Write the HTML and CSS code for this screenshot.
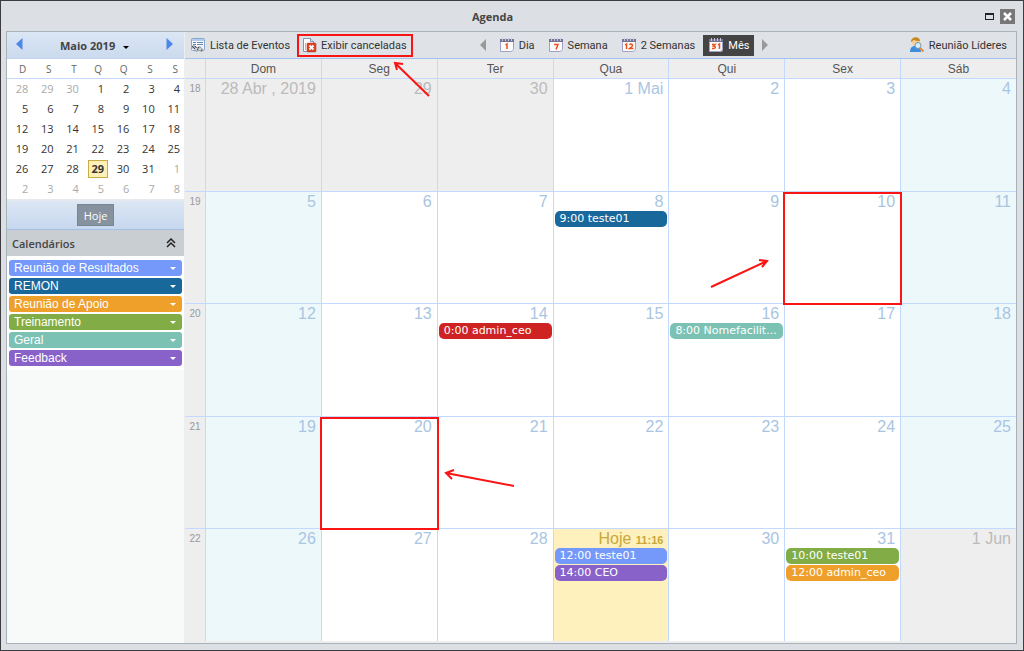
FILE: index.html
```html
<!DOCTYPE html>
<html lang="pt-BR">
<head>
    <meta charset="UTF-8">
    <meta name="viewport" content="width=device-width, initial-scale=1.0">
    <title>Agenda</title>
    <link rel="stylesheet" href="styles.css">
</head>
<body>
    <svg class="defs" width="0" height="0" aria-hidden="true">
        <symbol id="cal" viewBox="0 0 16 16">
            <path d="M1.500 3.500h13v9l-2 2h-11z" fill="#fdfcfd" stroke="#a29fc4"/>
            <path d="M1 2h14v3H1z" fill="#777394"/>
            <path d="M3.500 1v3M6.500 1v3M9.500 1v3M12.500 1v3" stroke="#c9c5d8"/>
            <path d="M11.500 14.500l3-3v3z" fill="#c9c5e4"/>
        </symbol>
    </svg>
    <div class="window">
        <div class="titlebar">
            <h1>Agenda</h1>
            <button class="maximize" aria-label="Maximizar"></button>
            <button class="close" aria-label="Fechar">
                <svg width="15" height="15" viewBox="0 0 15 15"><path d="M4 4l7 7M11 4l-7 7" stroke="#fff" stroke-width="2.500"/></svg>
            </button>
        </div>
        <div class="content">
            <div class="sidebar">
                <div class="month-nav">
                    <button aria-label="Anterior"><svg width="7" height="12" viewBox="0 0 7 12"><path d="M6.500 0v12L0 6z" fill="#4c86e6"/></svg></button>
                    <button class="month">Maio 2019 <svg width="6" height="3" viewBox="0 0 6 3"><path d="M0 0h6L3 3z" fill="#000"/></svg></button>
                    <button aria-label="Próximo"><svg width="7" height="12" viewBox="0 0 7 12"><path d="M.5 0v12L7 6z" fill="#4c86e6"/></svg></button>
                </div>
                <table class="mini">
                    <thead>
                        <tr><th>D</th><th>S</th><th>T</th><th>Q</th><th>Q</th><th>S</th><th>S</th></tr>
                    </thead>
                    <tbody>
                        <tr><td class="off">28</td><td class="off">29</td><td class="off">30</td><td>1</td><td>2</td><td>3</td><td>4</td></tr>
                        <tr><td>5</td><td>6</td><td>7</td><td>8</td><td>9</td><td>10</td><td>11</td></tr>
                        <tr><td>12</td><td>13</td><td>14</td><td>15</td><td>16</td><td>17</td><td>18</td></tr>
                        <tr><td>19</td><td>20</td><td>21</td><td>22</td><td>23</td><td>24</td><td>25</td></tr>
                        <tr><td>26</td><td>27</td><td>28</td><td class="today"><span>29</span></td><td>30</td><td>31</td><td class="off">1</td></tr>
                        <tr><td class="off">2</td><td class="off">3</td><td class="off">4</td><td class="off">5</td><td class="off">6</td><td class="off">7</td><td class="off">8</td></tr>
                    </tbody>
                </table>
                <div class="mini-footer"><button>Hoje</button></div>
                <div class="panel-header">
                    <h2>Calendários</h2>
                    <button aria-label="Recolher"><svg width="10" height="10" viewBox="0 0 10 10"><path d="M1 5l4-4 4 4M1 9l4-4 4 4" fill="none" stroke="#222" stroke-width="1.500"/></svg></button>
                </div>
                <div class="calendars">
                    <button class="blue">Reunião de Resultados<i></i></button>
                    <button class="navy">REMON<i></i></button>
                    <button class="orange">Reunião de Apoio<i></i></button>
                    <button class="green">Treinamento<i></i></button>
                    <button class="teal">Geral<i></i></button>
                    <button class="purple">Feedback<i></i></button>
                </div>
            </div>
            <div class="main">
                <div class="toolbar">
                    <button>
                        <svg width="16" height="16" viewBox="0 0 16 16">
                            <rect x="1.500" y="1.500" width="13" height="12" rx="1" fill="#f5f9fd" stroke="#86a5cf"/>
                            <path d="M2 2h12v2H2z" fill="#b5cbea"/>
                            <path d="M3 5.500h3M7 5.500h6M3 7.500h3M7 7.500h6" stroke="#6687b0"/>
                            <path d="M1 9l3-1 3 2 3-1 4 4-2 2-3-1-3 1-2-3-3-1z" fill="#a4abb2"/>
                            <path d="M2 9l4 4M5 9l3 4M8 10l4 4" stroke="#4a525b"/>
                            <circle cx="6" cy="12" r="1" fill="#eee"/><circle cx="10" cy="12" r="1" fill="#eee"/>
                        </svg>
                        Lista de Eventos
                    </button>
                    <button class="marked">
                        <svg width="14" height="16" viewBox="2 0 14 16">
                            <path d="M2.500 1.500h7l3 3v10h-10z" fill="#fff" stroke="#8095b4"/>
                            <path d="M9.500 1.500v3h3" fill="#dbe6f5" stroke="#8095b4"/>
                            <path d="M4.500 6v7" stroke="#a7b8d2"/>
                            <rect x="6" y="6" width="9" height="9" rx="1" fill="#dc4325" stroke="#b5301a" stroke-width=".5"/>
                            <path d="M8.500 8.500l4 4M12.500 8.500l-4 4" stroke="#fff" stroke-width="1.800"/>
                        </svg>
                        Exibir canceladas
                        <svg class="arrow arrow-up" width="38" height="36" viewBox="0 0 38 36"><path d="M36 35L2 2M4 9L2 2l8 1"/></svg>
                    </button>
                    <div class="views">
                        <button aria-label="Voltar"><svg width="6" height="12" viewBox="0 0 6 12"><path d="M6 0v12L0 6z" fill="#999"/></svg></button>
                        <button><svg width="16" height="16"><use href="#cal"/><path d="M6.500 8l1.500-1v5" fill="none" stroke="#f0501c" stroke-width="1.500"/></svg>Dia</button>
                        <button><svg width="16" height="16"><use href="#cal"/><path d="M6 7.500h4l-2 5" fill="none" stroke="#f0501c" stroke-width="1.500"/></svg>Semana</button>
                        <button><svg width="16" height="16"><use href="#cal"/><path d="M4 8l1.500-1v5M8.500 8c1-1.500 4-1 2.500 1.500l-2.500 2h4" fill="none" stroke="#f0501c" stroke-width="1.500"/></svg>2 Semanas</button>
                        <button class="active"><svg width="16" height="16"><use href="#cal"/><path d="M4 7.500h3L5.500 9c3 0 2 3-1.500 2.500M10 8l1.500-1v5" fill="none" stroke="#f0501c" stroke-width="1.500"/></svg>Mês</button>
                        <button aria-label="Avançar"><svg width="6" height="12" viewBox="0 0 6 12"><path d="M0 0v12l6-6z" fill="#999"/></svg></button>
                    </div>
                    <button>
                        <svg width="16" height="16" viewBox="0 0 16 16">
                            <path d="M1 15c0-4 2-6 5-6s6 2 6 6z" fill="#3d8edb"/>
                            <circle cx="6.500" cy="5" r="3.500" fill="#f6cf9b"/>
                            <path d="M2 5c0-6 9-6 9-1-2 1-5-1-6-1-1 0-2 2-3 2z" fill="#c48a1d"/>
                            <path d="M11 11l3.500 3.500" stroke="#e58a3c" stroke-width="2"/>
                            <circle cx="9" cy="8.500" r="3" fill="#d6edfa" stroke="#7c93a8"/>
                        </svg>
                        Reunião Líderes
                    </button>
                </div>
                <div class="month-view">
                    <table class="grid">
                        <thead>
                            <tr><th class="week"></th><th>Dom</th><th>Seg</th><th>Ter</th><th>Qua</th><th>Qui</th><th>Sex</th><th>Sáb</th></tr>
                        </thead>
                        <tbody>
                            <tr>
                                <th class="week">18</th>
                                <td class="off"><b>28 Abr , 2019</b></td>
                                <td class="off"><b>29</b></td>
                                <td class="off"><b>30</b></td>
                                <td><b>1 Mai</b></td>
                                <td><b>2</b></td>
                                <td><b>3</b></td>
                                <td class="weekend"><b>4</b></td>
                            </tr>
                            <tr>
                                <th class="week">19</th>
                                <td class="weekend"><b>5</b></td>
                                <td><b>6</b></td>
                                <td><b>7</b></td>
                                <td><b>8</b><a class="event navy" href="#">9:00 teste01</a></td>
                                <td><b>9</b><svg class="arrow arrow-right" width="60" height="32" viewBox="0 0 60 32"><path d="M2 29L58 3M50 2l8 1-5 6"/></svg></td>
                                <td class="marked"><b>10</b></td>
                                <td class="weekend"><b>11</b></td>
                            </tr>
                            <tr>
                                <th class="week">20</th>
                                <td class="weekend"><b>12</b></td>
                                <td><b>13</b></td>
                                <td><b>14</b><a class="event red" href="#">0:00 admin_ceo</a></td>
                                <td><b>15</b></td>
                                <td><b>16</b><a class="event teal" href="#">8:00 Nomefacilit...</a></td>
                                <td><b>17</b></td>
                                <td class="weekend"><b>18</b></td>
                            </tr>
                            <tr>
                                <th class="week">21</th>
                                <td class="weekend"><b>19</b></td>
                                <td class="marked"><b>20</b></td>
                                <td><b>21</b><svg class="arrow arrow-left" width="72" height="22" viewBox="0 0 72 22"><path d="M70 18L2 5M10 2L2 5l6 6"/></svg></td>
                                <td><b>22</b></td>
                                <td><b>23</b></td>
                                <td><b>24</b></td>
                                <td class="weekend"><b>25</b></td>
                            </tr>
                            <tr>
                                <th class="week">22</th>
                                <td class="weekend"><b>26</b></td>
                                <td><b>27</b></td>
                                <td><b>28</b></td>
                                <td class="today"><b>Hoje <small>11:16</small></b><a class="event blue" href="#">12:00 teste01</a><a class="event purple" href="#">14:00 CEO</a></td>
                                <td><b>30</b></td>
                                <td><b>31</b><a class="event green" href="#">10:00 teste01</a><a class="event orange" href="#">12:00 admin_ceo</a></td>
                                <td class="off"><b>1 Jun</b></td>
                            </tr>
                        </tbody>
                    </table>
                </div>
            </div>
        </div>
    </div>
</body>
</html>
```
FILE: styles.css
```css
* {
    box-sizing: border-box;
}

body {
    margin: 0;
    font-family: "Open Sans", sans-serif;
    font-size: 11px;
    color: #333;
}

button {
    margin: 0;
    padding: 0;
    border: none;
    background: none;
    font: inherit;
    color: inherit;
}

.defs {
    position: absolute;
}

.window {
    display: flex;
    flex-direction: column;
    height: 100vh;
    padding: 0 6px 6px 5px;
    border: 1px solid #3d3d40;
    background: #dcdfe4;
}

.titlebar {
    display: flex;
    align-items: center;
    gap: 6px;
    height: 30px;
    flex: none;
    padding-right: 2px;
}

.titlebar h1 {
    flex: 1;
    margin: 0;
    font-size: 11px;
    text-align: center;
    color: #444;
}

.maximize {
    width: 9px;
    height: 7px;
    border: 1px solid #222;
    border-top-width: 2px;
}

.close {
    display: flex;
    background: #777;
}

.content {
    display: flex;
    flex: 1;
    min-height: 0;
    border: 1px solid #a9b2b8;
    background: #eee;
}

.sidebar {
    width: 178px;
    flex: none;
    border-right: 1px solid #eceef0;
    background: #f8f9f9;
}

.month-nav {
    display: flex;
    align-items: center;
    justify-content: space-between;
    height: 27px;
    padding: 0 11px 0 9px;
    border-bottom: 1px solid #c3d5ee;
    background: linear-gradient(#dce7f4, #cbdaee);
}

.month-nav .month {
    font-weight: bold;
    color: #444;
}

.month svg {
    margin: 0 0 1px 5px;
}

.mini {
    width: 100%;
    table-layout: fixed;
    border-spacing: 0;
    background: #fff;
    text-align: right;
}

.mini th {
    height: 20px;
    padding: 0 6px 0 0;
    border-bottom: 1px solid #c3d9ff;
    font-size: 10px;
    font-weight: normal;
    color: #666;
    text-align: right;
}

.mini td {
    height: 20px;
    padding: 0 4px 0 0;
    line-height: 16px;
}

.mini .off {
    color: #aaa;
}

.mini .today {
    padding: 0;
}

.mini .today span {
    display: inline-block;
    padding: 0 3px;
    border: 1px solid #c9ad42;
    background: #fff0b8;
    font-weight: bold;
}

.mini-footer {
    display: flex;
    align-items: center;
    justify-content: center;
    height: 31px;
    border-top: 2px solid #e6eaee;
    border-bottom: 1px solid #a3bfe6;
    background: linear-gradient(#dce7f4, #c6d7ee);
}

.mini-footer button {
    height: 22px;
    padding: 0 6px;
    border: 1px solid #788694;
    background: #86929e;
    color: #fff;
}

.panel-header {
    display: flex;
    align-items: center;
    justify-content: space-between;
    height: 26px;
    padding: 0 8px 0 5px;
    background: #c9ced2;
}

.panel-header h2 {
    margin: 0;
    font-size: 11px;
    font-weight: 600;
    color: #444;
}

.panel-header button {
    display: flex;
}

.calendars {
    display: flex;
    flex-direction: column;
    gap: 2px;
    padding: 4px 2px;
    background: #fff;
}

.calendars button {
    display: flex;
    align-items: center;
    justify-content: space-between;
    height: 16px;
    padding: 0 6px 0 5px;
    border-radius: 3px;
    font-family: "Liberation Sans", Arial, sans-serif;
    font-size: 12px;
    color: #fff;
}

.calendars i {
    border: 3px solid transparent;
    border-top-color: #fff;
    border-bottom: none;
}

.blue { background: #7499fa; }
.navy { background: #19689c; }
.orange { background: #eea02b; }
.green { background: #82ad46; }
.teal { background: #7bc2b4; }
.purple { background: #8862c9; }
.red { background: #cf2323; }

.main {
    display: flex;
    flex-direction: column;
    flex: 1;
    min-width: 0;
}

.toolbar {
    display: flex;
    align-items: center;
    height: 27px;
    flex: none;
    gap: 3px;
    padding-right: 4px;
    border-bottom: 1px solid #a3c3ee;
    background: #dfe2e6;
    font-family: Roboto, "Open Sans", sans-serif;
}

.toolbar button {
    display: flex;
    align-items: center;
    gap: 4px;
    height: 21px;
    padding: 0 5px;
    white-space: nowrap;
}

.toolbar .marked {
    position: relative;
    outline: 2px solid #fb1414;
    outline-offset: -1px;
}

.views {
    display: flex;
    flex: 1;
    gap: 3px;
    padding-left: 60px;
}

.views .active {
    background: #444;
    color: #fff;
}

.month-view {
    flex: 1;
    min-height: 0;
    padding-bottom: 2px;
}

.grid {
    width: 100%;
    height: 100%;
    table-layout: fixed;
    border-spacing: 0;
    font-family: "Liberation Sans", Arial, sans-serif;
}

.grid th {
    height: 19px;
    padding: 0;
    border-left: 1px solid #c3d9ff;
    font-size: 12px;
    font-weight: normal;
    color: #555;
}

.grid .week {
    width: 20px;
    padding-top: 4px;
    border: none;
    font-size: 10px;
    vertical-align: top;
    color: #999;
}

.grid td {
    position: relative;
    height: 20%;
    padding: 0 1px;
    border-top: 1px solid #c3d9ff;
    border-left: 1px solid #c3d9ff;
    background: #fff;
    vertical-align: top;
}

.grid tbody .week {
    border-top: 1px solid #c3d9ff;
}

.grid td b {
    display: block;
    height: 19px;
    padding-right: 4px;
    font-size: 16px;
    font-weight: normal;
    line-height: 19px;
    text-align: right;
    color: #a9c5e2;
}

.grid .off {
    background: #eee;
}

.grid .off b {
    color: #bbb;
}

.grid .weekend {
    background: #edf8fb;
}

.grid .today {
    background: #fff1bd;
}

.grid .today b {
    color: #c9a83a;
}

.grid small {
    font-size: 11px;
    font-weight: bold;
}

.event {
    display: block;
    height: 16px;
    margin-bottom: 1px;
    padding-left: 5px;
    overflow: hidden;
    border-radius: 5px;
    font-family: "DejaVu Sans", Verdana, sans-serif;
    font-size: 11px;
    line-height: 16px;
    color: #fff;
    text-decoration: none;
    white-space: nowrap;
}

/* red highlights and arrows over the calendar */
.grid .marked::after {
    content: "";
    position: absolute;
    inset: 0 -2px -2px -2px;
    z-index: 1;
    border: 2px solid #fb1414;
}

.arrow {
    position: absolute;
    z-index: 2;
    fill: none;
    stroke: #fb1414;
    stroke-width: 2;
}

.arrow-up {
    top: 26px;
    left: 95px;
}

.arrow-right {
    top: 66px;
    right: 15px;
}

.arrow-left {
    top: 51px;
    left: 6px;
}
```
